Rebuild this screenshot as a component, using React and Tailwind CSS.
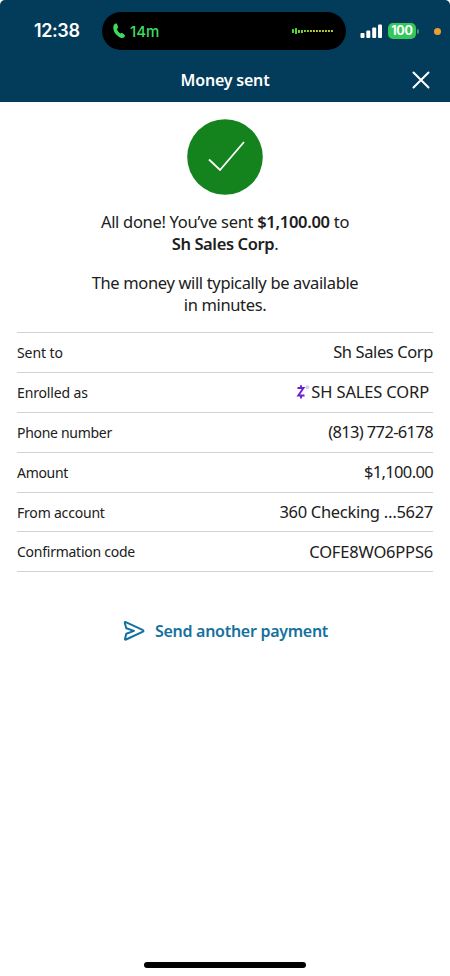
import { Fragment } from "react";

const details = [
  { label: "Sent to", value: "Sh Sales Corp", labelStyle: "tracking-[-0.1px]", valueStyle: "tracking-[-0.4px]" },
  { label: "Enrolled as", value: "SH SALES CORP", labelStyle: "tracking-[-0.15px]", valueStyle: "tracking-[-0.15px] pr-1", zelle: true },
  { label: "Phone number", value: "(813) 772-6178", labelStyle: "tracking-[-0.3px]", valueStyle: "tracking-[-0.65px]" },
  { label: "Amount", value: "$1,100.00", labelStyle: "tracking-[-0.3px]", valueStyle: "tracking-[-0.65px]" },
  { label: "From account", value: "360 Checking …5627", labelStyle: "tracking-[-0.2px]", valueStyle: "tracking-[-0.3px]" },
  { label: "Confirmation code", value: "COFE8WO6PPS6", labelStyle: "tracking-[-0.25px]", valueStyle: "tracking-[-0.2px]" },
];

function PhoneIcon() {
  return (
    <svg className="w-3 h-4" viewBox="0 0 12 16" fill="#3ddc60">
      <path d="M1.200 1.600C2 .500 3.400.200 4 1l1 2.800c.300.800-.100 1.400-.700 1.800-.400.300-.300.800 0 1.400.600 1.300 1.300 2.300 2.200 3.100.500.400.900.500 1.300.200.600-.500 1.300-.500 1.900 0l1.900 1.700c.700.700.200 1.900-.900 2.600-1.500 1-3.600.500-5.700-1.600C2.400 11.400.500 8.100.300 5.200.200 3.600.500 2.500 1.200 1.600z" />
    </svg>
  );
}

function Waveform() {
  return (
    <svg className="w-[42px] h-2" viewBox="0 0 42 8">
      <rect x="0" y="2" width="2" height="4" rx="0.500" fill="#4cdb32" />
      <rect x="3" y="1" width="2" height="6" rx="0.500" fill="#4cdb32" />
      {[6, 9, 12, 15, 18, 21, 24, 27, 30, 33, 36, 39].map((x, i) => (
        <rect key={x} x={x} y="3" width="1.900" height={i < 2 ? 3 : 2} rx="0.300" fill={i < 4 ? "#7fdc32" : "#c2cf35"} />
      ))}
    </svg>
  );
}

function StatusBar() {
  return (
    <div className="flex items-center h-[62px] font-[Inter,sans-serif]">
      <span className="ml-[34px] w-[68px] text-[18px] leading-none font-semibold tracking-[-0.4px] text-white">
        12:38
      </span>
      <div className="flex items-center w-[244px] h-[38px] pl-[11px] pr-[12px] rounded-full bg-black">
        <PhoneIcon />
        <span className="ml-[5px] text-[15px] leading-none font-medium text-[#3ddc60]">14m</span>
        <span className="flex-1" />
        <Waveform />
      </div>
      <svg className="ml-[14px] w-[22px] h-[14px]" viewBox="0 0 22 14" fill="#fff">
        <rect x="0.500" y="9" width="4" height="5" rx="1" />
        <rect x="6.300" y="6.500" width="4" height="7.500" rx="1" />
        <rect x="12.200" y="3.500" width="4" height="10.500" rx="1" />
        <rect x="18" y="0.500" width="4" height="13.500" rx="1" />
      </svg>
      <div className="flex items-center justify-center ml-[6px] w-[28px] h-[16px] rounded-[5px] bg-[#34c759] text-[12.500px] leading-none font-bold tracking-[-0.2px] text-white">
        100
      </div>
      <span className="ml-px w-[2px] h-[5px] rounded-r-full bg-[#2fa65d]" />
      <span className="ml-[15px] w-[7px] h-[7px] rounded-full bg-[#eb9f32]" />
    </div>
  );
}

function ZelleMark() {
  return (
    <svg className="w-[15px] h-[16px]" viewBox="0 0 15 16" fill="none">
      <path d="M1.500 4h6L2.300 11.500h6.200M5 1.200v2.500M5 11.500v3" stroke="#6d1ed4" strokeWidth="1.900" />
      <circle cx="11.300" cy="3.300" r="1.500" fill="#e0d2f2" stroke="#d4c3ec" />
    </svg>
  );
}

function App() {
  return (
    <div className="bg-white">
      <div className="flex flex-col h-[976px] overflow-hidden bg-white font-['Noto_Sans',sans-serif] text-[#202020]">
        <header className="h-[102px] rounded-t-[5px] bg-[#033c5a]">
          <StatusBar />
          <div className="grid grid-cols-[1fr_auto_1fr] items-center h-[35px] px-[20px] text-white">
            <h1 className="col-start-2 text-[16px] leading-none font-semibold tracking-[-0.2px]">Money sent</h1>
            <svg className="justify-self-end w-[18px] h-[18px]" viewBox="0 0 18 18" stroke="#fff" strokeWidth="2" strokeLinecap="round">
              <path d="M1.500 1.500l15 15M16.500 1.500l-15 15" />
            </svg>
          </div>
        </header>

        <main className="flex flex-col">
          <svg className="self-center mt-[17px] w-[76px] h-[76px]" viewBox="0 0 76 76" fill="none">
            <circle cx="38" cy="38" r="37.800" fill="#14831e" />
            <path d="M22 40.500l11 10.500 24-28" stroke="#fff" strokeWidth="1.800" />
          </svg>
          <p className="mt-[16px] text-center text-[16.500px] leading-[22px] tracking-[-0.3px]">
            All done! You’ve sent <strong className="font-semibold">$1,100.00</strong> to
            <br />
            <strong className="font-semibold tracking-[-0.4px]">Sh Sales Corp</strong>.
          </p>
          <p className="mt-[17px] text-center text-[16.500px] leading-[22px] tracking-[-0.35px]">
            The money will typically be available
            <br />
            in minutes.
          </p>

          {/* Payment details */}
          <dl className="grid grid-cols-[auto_1fr] mt-[16px] mx-[17px] border-t border-[#d2d2d2]">
            {details.map((row) => (
              <Fragment key={row.label}>
                <dt className={`flex items-center h-[39.900px] border-b border-[#d2d2d2] text-[14px] ${row.labelStyle}`}>
                  {row.label}
                </dt>
                <dd className={`flex items-center justify-end h-[39.900px] border-b border-[#d2d2d2] text-[16.500px] ${row.valueStyle}`}>
                  {row.zelle && <ZelleMark />}
                  <span>{row.value}</span>
                </dd>
              </Fragment>
            ))}
          </dl>

          <button className="flex items-center self-center mt-[47px] ml-px gap-[10px] text-[16px] leading-6 font-semibold tracking-[-0.28px] text-[#14719f]">
            <svg className="w-[22px] h-[22px]" viewBox="0 0 22 22" fill="none" stroke="#14719f" strokeWidth="2" strokeLinejoin="round" strokeLinecap="round">
              <path d="M1.800 3Q1.500 1.700 2.800 2.200L20 10.200Q21 10.900 20 11.600L3 19.500Q1.700 20 2 18.700L3.300 13.700 11 10.900 3.300 8.200z" />
            </svg>
            <span>Send another payment</span>
          </button>
        </main>

        <div className="self-center mt-auto mb-[8px] w-[162px] h-[6px] rounded-full bg-black" />
      </div>
    </div>
  );
}

export default App;
